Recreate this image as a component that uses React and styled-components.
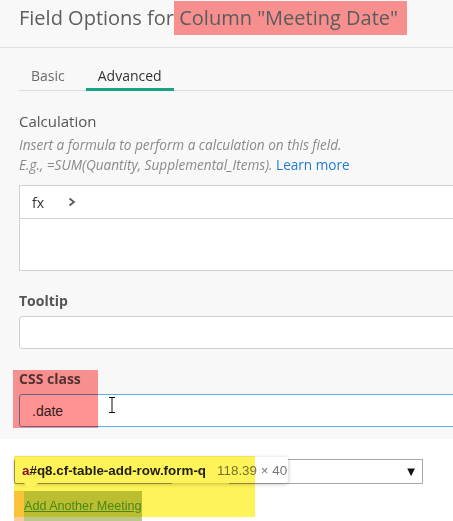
import React from "react";
import styled, { createGlobalStyle } from "styled-components";

const Global = createGlobalStyle`
  html, body {
    margin: 0;
    padding: 0;
    background: #fff;
    overflow: hidden;
  }
  body {
    font-family: "Open Sans", "Noto Sans", sans-serif;
  }
`;

const Page = styled.div`
  width: 453px;
  height: 521px;
  overflow: hidden;
  position: relative;
  background: #fff;
`;

const Panel = styled.div`
  width: 520px;
  background: #f8f8f8;
  padding-bottom: 12px;
`;

const Header = styled.div`
  padding: 3px 19px 0;
  box-sizing: border-box;
  border-bottom: 1px solid #e1e1e1;
  height: 48px;
`;

const Title = styled.h1`
  margin: 0;
  font-size: 20px;
  line-height: 30px;
  font-weight: 400;
  color: #5e5e5e;
  white-space: nowrap;
`;

const Mark = styled.span`
  background: #ff9393;
  mix-blend-mode: multiply;
  padding: 3px 9px 4px 0;
`;

const TabBar = styled.div`
  display: flex;
  gap: 9px;
  margin: 18px 0 0 19px;
  border-bottom: 1px solid #dedede;
`;

const Tab = styled.div`
  padding: 0 12px 2px;
  font-size: 14px;
  line-height: 20px;
  color: ${(p) => (p.active ? "#333" : "#6a6a6a")};
  border-bottom: 3px solid ${(p) => (p.active ? "#17a385" : "transparent")};
  margin-bottom: -1px;
`;

const Body = styled.div`
  padding: 20px 0 0 19px;
`;

const Label = styled.div`
  font-size: ${(p) => (p.bold ? "14px" : "15px")};
  font-weight: ${(p) => (p.bold ? 700 : 400)};
  line-height: 20px;
  color: #555;
  margin-top: ${(p) => p.top || 0}px;
`;

const Help = styled.div`
  margin-top: 4px;
  font-size: 13.6px;
  line-height: 20px;
  font-style: italic;
  color: #8a8a8a;
  a {
    font-style: normal;
    color: #1f7bd8;
    text-decoration: none;
  }
`;

const FormulaBox = styled.div`
  margin-top: 10px;
  background: #fff;
  border: 1px solid #d2d2d2;
`;

const FormulaHead = styled.div`
  height: 32px;
  display: flex;
  align-items: center;
  gap: 24px;
  padding-left: 12px;
  border-bottom: 1px solid #d2d2d2;
  font-size: 14px;
  color: #333;
`;

const FormulaArea = styled.div`
  height: 51px;
`;

const Input = styled.div`
  position: relative;
  margin-top: 5px;
  height: 33px;
  box-sizing: border-box;
  background: #fff;
  border: 1px solid ${(p) => (p.focus ? "#63acec" : "#cfcfcf")};
  border-radius: 3px;
  padding-left: 12px;
  display: flex;
  align-items: center;
  font-family: "Liberation Sans", Arial, sans-serif;
  font-size: 14px;
  color: #333;
`;

const LabelWrap = styled.div`
  position: relative;
`;

const PinkOverlay = styled.div`
  position: absolute;
  left: -6px;
  top: 1px;
  width: 85px;
  height: 58px;
  background: #ff9393;
  mix-blend-mode: multiply;
  pointer-events: none;
`;

const Caret = styled.svg`
  position: absolute;
  left: 88px;
  top: 2px;
`;

const Lower = styled.div`
  position: relative;
  padding: 20px 0 0 14px;
  height: 82px;
`;

const FieldRow = styled.div`
  display: flex;
  gap: 56px;
`;

const TextField = styled.div`
  width: 159px;
  height: 25px;
  box-sizing: border-box;
  border: 1px solid #a9a9a9;
  border-radius: 2px;
`;

const Select = styled.div`
  width: 194px;
  height: 25px;
  box-sizing: border-box;
  border: 1px solid #a9a9a9;
  display: flex;
  align-items: center;
  justify-content: flex-end;
  padding-right: 7px;
  font-size: 10px;
  color: #111;
  font-family: "DejaVu Sans", sans-serif;
`;

const LinkBox = styled.div`
  margin-top: 7px;
  display: inline-flex;
  background: rgba(246, 178, 107, 0.66);
  padding-left: 10px;
`;

const LinkText = styled.a`
  display: block;
  height: 40px;
  background: rgba(147, 196, 125, 0.6);
  font-family: "Liberation Sans", Arial, sans-serif;
  font-size: 12.6px;
  line-height: 30px;
  color: #4a8f3c;
  text-decoration: underline;
`;

const InspectTip = styled.div`
  position: absolute;
  left: 15px;
  top: 18px;
  width: 273px;
  height: 26px;
  box-sizing: border-box;
  background: #fff;
  border-radius: 3px;
  box-shadow: 0 1px 4px rgba(0, 0, 0, 0.25);
  display: flex;
  align-items: center;
  padding-left: 7px;
  font-family: "Liberation Sans", Arial, sans-serif;
  font-size: 13.4px;
  white-space: nowrap;
  &::after {
    content: "";
    position: absolute;
    left: 9px;
    bottom: -7px;
    border-left: 7px solid transparent;
    border-right: 7px solid transparent;
    border-top: 7px solid #fff;
  }
`;

const Sel = styled.span`
  font-weight: 700;
  color: #222;
  b {
    color: #881280;
  }
`;

const Dims = styled.span`
  margin-left: 11px;
  color: #777;
`;

const Highlighter = styled.div`
  position: absolute;
  left: 14px;
  top: 17px;
  width: 241px;
  height: 61px;
  background: #fff35a;
  mix-blend-mode: multiply;
  pointer-events: none;
`;

export default function App() {
  return (
    <Page>
      <Global />
      <Panel>
        <Header>
          <Title>
            Field Options for<Mark> Column "Meeting Date"</Mark>
          </Title>
        </Header>
        <TabBar>
          <Tab>Basic</Tab>
          <Tab active>Advanced</Tab>
        </TabBar>
        <Body>
          <Label>Calculation</Label>
          <Help>
            Insert a formula to perform a calculation on this field.
            <br />
            E.g., =SUM(Quantity, Supplemental_Items). <a href="#">Learn more</a>
          </Help>
          <FormulaBox>
            <FormulaHead>
              <span>fx</span>
              <svg width="8" height="10" viewBox="0 0 8 10">
                <path d="M1.5 1.5 L6 5 L1.5 8.5" fill="none" stroke="#555" strokeWidth="1.7" />
              </svg>
            </FormulaHead>
            <FormulaArea />
          </FormulaBox>
          <Label bold top={20}>Tooltip</Label>
          <Input />
          <LabelWrap>
            <Label bold top={20}>CSS class</Label>
            <Input focus>
              .date
              <Caret width="8" height="16" viewBox="0 0 8 16">
                <path d="M1 0.5 H7 M4 0.5 V15.5 M1 15.5 H7" stroke="#111" strokeWidth="1" fill="none" />
              </Caret>
            </Input>
            <PinkOverlay />
          </LabelWrap>
        </Body>
      </Panel>
      <Lower>
        <FieldRow>
          <TextField />
          <Select>▼</Select>
        </FieldRow>
        <LinkBox>
          <LinkText href="#">Add Another Meeting</LinkText>
        </LinkBox>
        <InspectTip>
          <Sel>
            <b>a</b>#q8.cf-table-add-row.form-q
          </Sel>
          <Dims>118.39 × 40</Dims>
        </InspectTip>
        <Highlighter />
      </Lower>
    </Page>
  );
}
